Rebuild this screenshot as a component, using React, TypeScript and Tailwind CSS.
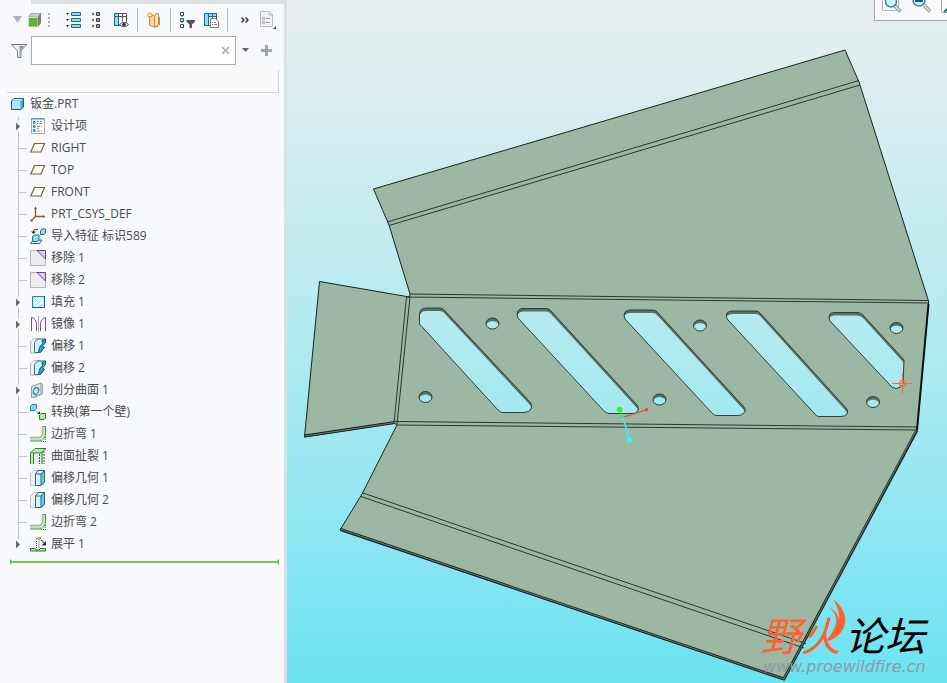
import { useState, type ReactNode } from 'react';

type IconName =
    | 'items'
    | 'plane'
    | 'csys'
    | 'import'
    | 'remove'
    | 'fill'
    | 'mirror'
    | 'offset'
    | 'split'
    | 'convert'
    | 'flange'
    | 'rip'
    | 'offsetGeom'
    | 'flatten';

interface TreeItem {
    label: string;
    icon: IconName;
    expandable?: boolean;
}

const TREE_ITEMS: TreeItem[] = [
    { label: '设计项', icon: 'items', expandable: true },
    { label: 'RIGHT', icon: 'plane' },
    { label: 'TOP', icon: 'plane' },
    { label: 'FRONT', icon: 'plane' },
    { label: 'PRT_CSYS_DEF', icon: 'csys' },
    { label: '导入特征 标识589', icon: 'import' },
    { label: '移除 1', icon: 'remove' },
    { label: '移除 2', icon: 'remove' },
    { label: '填充 1', icon: 'fill', expandable: true },
    { label: '镜像 1', icon: 'mirror', expandable: true },
    { label: '偏移 1', icon: 'offset' },
    { label: '偏移 2', icon: 'offset' },
    { label: '划分曲面 1', icon: 'split', expandable: true },
    { label: '转换(第一个壁)', icon: 'convert' },
    { label: '边折弯 1', icon: 'flange' },
    { label: '曲面扯裂 1', icon: 'rip' },
    { label: '偏移几何 1', icon: 'offsetGeom' },
    { label: '偏移几何 2', icon: 'offsetGeom' },
    { label: '边折弯 2', icon: 'flange' },
    { label: '展平 1', icon: 'flatten', expandable: true },
];

const ICONS: Record<IconName, ReactNode> = {
    items: (
        <>
            <path d="M1.5 .5h13v15h-13z" fill="#fff" stroke="#a3abae" />
            <path d="M1 0h13v1.5H1z" fill="#3aa0c4" />
            <path d="M3.5 3.5h1.5v2h-1.5zM3.5 7.500h1.5v2h-1.5zM3.5 11.5h1.5v2h-1.5z" fill="#a9e0f7" stroke="#1e86ad" />
            <path d="M7 3.500h2M10 3.500h2M7 5.500h1M9 5.500h3M7 8.500h3M11 8.500h1M7 10.500h2M7 13h3M11 13h1" stroke="#8b8f91" />
        </>
    ),
    plane: <path d="M4.5 3.5h10l-3.500 8.500H.8z" fill="#fdfcf6" stroke="#80622c" strokeWidth="1.200" />,
    csys: (
        <>
            <path d="M5.5 2v8.500H14M5.500 10.500L1 15" fill="none" stroke="#80622c" strokeWidth="1.300" />
            <path d="M4 3l1.500-2.500L7 3zM13 9l2.500 1.500L13 12zM.5 12.500v3h3z" fill="#80622c" />
        </>
    ),
    import: (
        <>
            <path d="M10.5 2.5L12 1h3.500v4L14 6.500h-3.500z" fill="#8fdcf7" stroke="#236f91" />
            <path d="M.5 15.5h9l2.500-3.500H3z" fill="#e3f7fd" stroke="#236f91" />
            <path d="M2.500 8.500L4 7h5v5l-1.500 1.500h-5z" fill="#8fdcf7" stroke="#236f91" />
            <path d="M8 1.500H5.500C4 1.500 3.500 2.500 3.500 4" fill="none" stroke="#333" />
            <path d="M1 3.500h5L3.500 6z" fill="#333" />
        </>
    ),
    remove: (
        <>
            <path d="M.5 .5H8l7.500 7.500v7.500H.5z" fill="#ececee" />
            <path d="M.5 16V.5H7M15.500 9v6.500H0" fill="none" stroke="#b4b4b6" />
            <path d="M7 .5h8.500V9z" fill="#dccdf5" stroke="#6d3b98" />
        </>
    ),
    fill: (
        <>
            <path d="M2 2h13v12H2z" fill="#b9ecfb" />
            <path d="M4 8l4-4M4 12l8-8M9 12l4-4M4 10l6-6M6 13l7-7" stroke="#fff" />
            <path d="M2.500 2.500h12v11h-12z" fill="none" stroke="#2389ad" />
            <path d="M14.500 2v11.500H2" fill="none" stroke="#1a617f" />
        </>
    ),
    mirror: (
        <>
            <path d="M1.500 15V1.500c3 .5 5 3 5 7V15" fill="#fff" stroke="#7b4b9e" />
            <path d="M15.500 15V1.500c-3 .5-5 3-5 7V15" fill="#fff" stroke="#7b4b9e" />
            <path d="M8.500 0v16" stroke="#aaa" />
        </>
    ),
    offset: (
        <>
            <path d="M.5 4L4 .5h7L8 4v11H.5z" fill="#efefef" stroke="#b2b2b2" />
            <path d="M4.500 4.500L7.500 1h8v3L12 7.500l2 2-3.500 5h-6z" fill="#d3f3fd" stroke="#277aa0" />
            <path d="M12 2.500L15.500 1v3.500l-3 3.500 2 1.500-4.500 5-1.500-1 1.500-5 2.500-3z" fill="#28a2d2" stroke="#1c5977" />
        </>
    ),
    split: (
        <>
            <path d="M1.500 4.500L11 1v11l-9.500 3.500z" fill="#e4e6e7" stroke="#92989b" />
            <path d="M11 1l1.500 1v10L3 16l-1.500-.5" fill="none" stroke="#9ea5a7" />
            <ellipse cx="6" cy="9" rx="2.500" ry="3.500" fill="#d5f3ff" stroke="#258bb1" strokeWidth="1.300" transform="rotate(20 6 9)" />
        </>
    ),
    convert: (
        <>
            <path d="M.5 2.500l1.500-2h4.500v4l-1.500 2H.5z" fill="#80d8fa" stroke="#2783a8" />
            <path d="M9.500 11l1.500-1.500h4.500V14L14 15.500H9.500z" fill="#b3ee92" stroke="#357a28" />
            <path d="M6.500 7L9 9.500" stroke="#444" strokeDasharray="1 1" />
            <path d="M10 7v3H7z" fill="#333" />
        </>
    ),
    flange: (
        <>
            <path d="M0 11.500h8c3 0 4.500-1.500 4.500-4.500V.5h3V8c0 4-2.500 7-7 7H0z" fill="#c2e9b4" />
            <path d="M0 11.500h8c3 0 4.500-1.500 4.500-4.500V1" fill="none" stroke="#a9afa9" strokeWidth="1.300" />
            <path d="M12.500 .5h3V8c0 4-2.500 7-7 7H0" fill="none" stroke="#55904b" />
            <path d="M11 15.500h5M15.500 11v5" stroke="#317229" strokeDasharray="1 1" />
        </>
    ),
    rip: (
        <>
            <path d="M3.500 5h8v11h-8z" fill="#ececec" />
            <path d="M.5 5L5 .5h11L11 5z" fill="#bce9a7" stroke="#3d7d32" />
            <path d="M1 5h2v11H1z" fill="#bce9a7" />
            <path d="M.5 16V5M3.500 16V5" stroke="#3d7d32" />
            <path d="M9.500 6v10M14 3v13" stroke="#254f86" strokeDasharray="2 1" />
            <path d="M11.500 5v11M12.500 4v12" stroke="#77b968" />
        </>
    ),
    offsetGeom: (
        <>
            <path d="M.5 4L4 .5h5v15H.5z" fill="#efefef" stroke="#c0c0c0" />
            <path d="M5.500 4L8 .5h6.500V12L11 15.500H5.500z" fill="#d3f3fd" stroke="#21658a" />
            <path d="M11 4l3.500-3.500V12L11 15.500z" fill="#6cc6f2" stroke="#21658a" />
            <path d="M5.500 4H11" stroke="#21658a" />
        </>
    ),
    flatten: (
        <>
            <path d="M.5 12.500H5L6.500 14H9l1.500-1.500h5v2.500H.5z" fill="#b8ebab" stroke="#317229" />
            <path d="M6.500 12V3.500h2.500V12" fill="#fff" stroke="#2e5c28" strokeDasharray="1 1" />
            <path d="M6 3.500L7.500 2H11L9.500 3.500" fill="#b8ebab" stroke="#55904b" />
            <path d="M11 4.500c1.500 0 2.500 1 3 2.500" fill="none" stroke="#333" />
            <path d="M16 5v4.500h-4.500z" fill="#333" />
        </>
    ),
};

// Slot outlines of the base wall, left to right
const SLOTS = [
    'M419.5 324V314Q420 308 426 308H440Q443 308 445 311L530 402Q533 406 531 409Q529 412.5 524 412.5H503Q500 412.5 498 410Z',
    'M518 318Q516 314 518 311Q520 308.5 523 308.5H546Q549 308.5 551 311L637 405Q640 409 637 412Q636 413.5 632 413.5H609Q607 413.5 604 411Z',
    'M625 319Q623 315 625 312Q627 310 630 310H653Q656 310 658 313L743 406Q747 410 744 413Q742 415.5 738 415.5H717Q714 415.5 712 413Z',
    'M728 320Q725 317 727 313Q729 311 733 311H756Q759 311 761 314L846 408Q849 411 847 414Q845 416.5 841 416.5H819Q816 416.5 814 413Z',
    'M830 321Q828 317 830 314Q832 312.5 835 312.5H857Q861 312.5 863 315L904 360L903 384Q901 388 896 388.5Q892 388 890 385Z',
];

const HOLES = [
    [492.5, 323.5],
    [425.5, 397],
    [700, 325.5],
    [659.5, 399.5],
    [896.5, 328],
    [873, 402],
];

function Cutouts() {
    return (
        <>
            {SLOTS.map(d => <path key={d} d={d} />)}
            {HOLES.map(([x, y]) => <ellipse key={x} cx={x} cy={y} rx="6.5" ry="5.5" />)}
        </>
    );
}

function Connector({ first, last, arrow }: { first?: boolean; last?: boolean; arrow?: boolean }) {
    return (
        <svg width="16" height="22" viewBox="0 0 16 22" className="block" aria-hidden="true">
            <path d={`M4.5 ${first ? 2 : 0}V${arrow ? 6 : 11}`} stroke="#c3c6c8" />
            {!last && <path d={`M4.5 ${arrow ? 16 : 11}V22`} stroke="#c3c6c8" />}
            {arrow ? <path d="M2 7.5l4 4-4 4z" fill="#666" /> : <path d="M5 11.5h8" stroke="#c3c6c8" />}
        </svg>
    );
}

function ModelTree() {
    const [selected, setSelected] = useState('');

    return (
        <div className="text-[12px] leading-[22px] text-[#4b4b4b]">
            <div className="flex h-[22px] items-center gap-[5px] pl-[11px]">
                <svg width="15" height="14" viewBox="0 0 15 14" className="-ml-px" aria-hidden="true">
                    <path d="M1.5 4L4 1.5h9.500V10L11 12.500H1.5z" fill="#35a9e1" stroke="#1d5a7c" />
                    <path d="M2 4h8.500v8H2z" fill="#ade7fb" />
                    <path d="M2 3.500l2-1.500h9l-2 1.500z" fill="#dff6fe" />
                </svg>
                <span>钣金.PRT</span>
            </div>
            <ul className="pl-[14px]">
                {TREE_ITEMS.map((item, i) => (
                    <li key={item.label} className="flex h-[22px] items-center">
                        {item.expandable ? (
                            <button type="button" aria-label={`展开 ${item.label}`}>
                                <Connector arrow first={i === 0} last={i === TREE_ITEMS.length - 1} />
                            </button>
                        ) : (
                            <Connector />
                        )}
                        <button
                            type="button"
                            aria-pressed={selected === item.label}
                            onClick={() => setSelected(item.label)}
                            className="flex items-center gap-[5px] whitespace-nowrap"
                        >
                            <svg width="16" height="16" viewBox="0 0 16 16" aria-hidden="true">
                                {ICONS[item.icon]}
                            </svg>
                            {item.label}
                        </button>
                    </li>
                ))}
            </ul>
        </div>
    );
}

function ToolButton({ label, className = '', children }: { label: string; className?: string; children: ReactNode }) {
    return (
        <button type="button" aria-label={label} className={`shrink-0 ${className}`}>
            {children}
        </button>
    );
}

function Separator() {
    return <span className="h-6 w-px shrink-0 bg-[#b3b8bb]" />;
}

function TreeToolbar() {
    return (
        <div className="flex h-8 items-center pl-[13px]">
            <ToolButton label="菜单" className="mr-[5px]">
                <svg width="10" height="8" viewBox="0 0 10 8"><path d="M0 0h9L4.5 7z" fill="#b2b5b7" /></svg>
            </ToolButton>
            <ToolButton label="模型" className="mr-[6px]">
                <svg width="14" height="14" viewBox="0 0 14 14">
                    <path d="M0 4l3-4h11l-4 4z" fill="#a6a6a6" />
                    <path d="M1.5 3.500L3.500 1h8L10 3.500z" fill="#c9c9c9" />
                    <path d="M10 4l3-4v10l-3 4z" fill="#7b7b7b" />
                    <path d="M0 4h10v10H0z" fill="#d5dfd2" />
                    <path d="M1 5h8.500v8.500H1z" fill="#58b531" />
                </svg>
            </ToolButton>
            <svg width="3" height="16" viewBox="0 0 3 16" className="mr-[15px] shrink-0" aria-hidden="true">
                <path d="M1 1v15" stroke="#aeb1b3" strokeWidth="2" strokeDasharray="2 2" />
            </svg>
            <ToolButton label="全部展开" className="mr-[10px]">
                <svg width="16" height="16" viewBox="0 0 16 16">
                    <path d="M5.5 .5h9v3h-9zM5.500 6.500h9v3h-9zM5.500 12.500h9v3h-9z" fill="#8bdcf8" stroke="#1c698d" />
                    <path d="M0 1h3L1.500 3zM0 7h3L1.500 9zM0 13h3L1.500 15z" fill="#222" />
                </svg>
            </ToolButton>
            <ToolButton label="全部折叠" className="mr-[13px]">
                <svg width="9" height="16" viewBox="0 0 9 16">
                    <path d="M4.5 .5h3v3h-3zM4.500 6.500h3v3h-3zM4.500 12.500h3v3h-3z" fill="#999" stroke="#444" />
                    <path d="M.5 .5v3l2-1.500zM.5 6.500v3l2-1.500zM.5 12.500v3l2-1.500z" fill="#222" />
                </svg>
            </ToolButton>
            <ToolButton label="树列" className="mr-[8px]">
                <svg width="15" height="16" viewBox="0 0 15 16">
                    <path d="M.5 1.500h12v12H.5z" fill="#fff" stroke="#555" />
                    <path d="M.5 1.500h4v12h-4z" fill="#8bdcf8" stroke="#1c698d" />
                    <path d="M.5 4.500h12M8.500 1.500v8" stroke="#555" />
                    <path d="M5.500 12.500Q10 8 14.500 12.500Q10 17 5.500 12.500z" fill="#fff" stroke="#555" />
                    <circle cx="10" cy="12.500" r="1.800" fill="#333" />
                </svg>
            </ToolButton>
            <Separator />
            <ToolButton label="新建层" className="mx-[9px]">
                <svg width="14" height="16" viewBox="0 0 14 16">
                    <path d="M2.500 3h4l1 1.500 5 .5v8L10 15H7l-4.500-2z" fill="#f6d595" stroke="#c18c45" />
                    <path d="M7.500 5l1.500-3.500h2.500V12l-4 3z" fill="#fde6bb" stroke="#c18c45" />
                    <path d="M3 0v6M0 3h6M1 1l4 4M5 1L1 5" stroke="#f08a13" />
                    <circle cx="3" cy="3" r="1.300" fill="#fff3b5" />
                </svg>
            </ToolButton>
            <Separator />
            <ToolButton label="树过滤器" className="ml-[9px] mr-[8px]">
                <svg width="16" height="16" viewBox="0 0 16 16">
                    <path d="M2 4v8" stroke="#555" strokeDasharray="1 1" />
                    <path d="M.5 .5h3v3h-3zM.5 12.500h3v3h-3z" fill="#fff" stroke="#444" />
                    <path d="M.5 6.500h3v3h-3z" fill="#8bdcf8" stroke="#1c698d" />
                    <path d="M6.500 8H15v1.500L12 12.500V16h-2.500v-3.500l-3-3z" fill="#555" />
                </svg>
            </ToolButton>
            <ToolButton label="树设置" className="mr-[8px]">
                <svg width="15" height="16" viewBox="0 0 15 16">
                    <path d="M.5 1.500h12v12H.5z" fill="#fff" stroke="#555" />
                    <path d="M.5 1.500h4v12h-4zM4.500 1.500h8v3h-8z" fill="#8bdcf8" stroke="#1c698d" />
                    <path d="M8.500 1.500v5" stroke="#1c698d" />
                    <path d="M6.500 6.500h5l3 3v6h-8z" fill="#fff" stroke="#777" />
                    <path d="M8 10.500h1M10 10.500h2M8 12.500h1M10 12.500h3" stroke="#777" />
                </svg>
            </ToolButton>
            <Separator />
            <ToolButton label="更多" className="ml-[13px] mr-[10px]">
                <svg width="9" height="8" viewBox="0 0 9 8">
                    <path d="M.5 1.500L3 4 .5 6.500M4.500 1.500L7 4 4.500 6.500" fill="none" stroke="#333" strokeWidth="1.400" />
                </svg>
            </ToolButton>
            <ToolButton label="详细信息">
                <svg width="17" height="18" viewBox="0 0 17 18">
                    <path d="M.5 .5h8.500L12.500 4v11.500H.5z" fill="#f1f2f3" stroke="#b7babc" />
                    <path d="M9 .5V4h3.500" fill="none" stroke="#b7babc" />
                    <circle cx="3.500" cy="7.500" r="1.200" fill="none" stroke="#999" />
                    <circle cx="3.500" cy="11.500" r="1.200" fill="none" stroke="#999" />
                    <path d="M6 7.500h4M6 11.500h4" stroke="#999" />
                    <path d="M16 15v3h-3z" fill="#444" />
                </svg>
            </ToolButton>
        </div>
    );
}

function SearchRow() {
    const [query, setQuery] = useState('');

    return (
        <div className="flex h-[29px] items-center pl-[11px]">
            <svg width="17" height="16" viewBox="0 0 17 16" className="mr-[3px] shrink-0" aria-hidden="true">
                <path d="M.5 1.500h15L10 8v6.500H6.500V8z" fill="#eee" stroke="#888" />
                <path d="M8.500 3h5L9.500 7.500V14h-1z" fill="#999" />
                <path d="M0 1.500h16" stroke="#777" />
            </svg>
            <div className="flex h-full w-[205px] items-center border border-[#a3afb3] bg-white pr-[5px]">
                <input
                    type="text"
                    aria-label="搜索模型树"
                    value={query}
                    onChange={e => setQuery(e.target.value)}
                    className="h-full min-w-0 flex-1 px-1 text-[12px] outline-none"
                />
                <button type="button" aria-label="清除" onClick={() => setQuery('')}>
                    <svg width="9" height="9" viewBox="0 0 9 9"><path d="M1 1l7 7M8 1L1 8" stroke="#9da0a2" strokeWidth="1.200" /></svg>
                </button>
            </div>
            <button type="button" aria-label="搜索选项" className="ml-[6px]">
                <svg width="8" height="5" viewBox="0 0 8 5"><path d="M0 0h7L3.500 4z" fill="#666" /></svg>
            </button>
            <button type="button" aria-label="添加" className="ml-[11px]">
                <svg width="12" height="12" viewBox="0 0 12 12"><path d="M5.500 0v11M0 5.500h11" stroke="#a3a6a8" strokeWidth="3" /></svg>
            </button>
        </div>
    );
}

function SheetMetalModel() {
    return (
        <svg
            className="block h-full w-full"
            viewBox="287 0 660 683"
            preserveAspectRatio="xMidYMid meet"
            role="img"
            aria-label="钣金"
        >
            <defs>
                <clipPath id="cutouts">
                    {SLOTS.map(d => <path key={d} d={d} />)}
                    {HOLES.map(([x, y]) => <ellipse key={x} cx={x} cy={y} rx="6.5" ry="5.5" />)}
                </clipPath>
                <mask id="through" maskUnits="userSpaceOnUse" x="287" y="0" width="660" height="683">
                    <path d="M287 0h660v683H287z" fill="#fff" />
                    <g clipPath="url(#cutouts)">
                        <g transform="translate(0 3)">
                            <Cutouts />
                        </g>
                    </g>
                </mask>
            </defs>

            {/* Walls */}
            <g mask="url(#through)">
                <path
                    d="M319.5 281.5L409.5 297L410 294L389 225L373.5 189L845 50L859 82L928.5 301V305L917 430L784 680L340 530L362 494L397 425L394 423L304.5 437Z"
                    fill="#9cb8a5"
                    stroke="#18221d"
                />
                <g fill="#5d7064">
                    <Cutouts />
                </g>
            </g>
            <g fill="none" stroke="#26332b" strokeWidth=".9">
                <Cutouts />
            </g>

            {/* Bend lines */}
            <g fill="none" stroke="#1c2721" strokeWidth=".9">
                <path d="M387 222L859 80.5M389 225.5L860 85" />
                <path d="M410 294L928 300.5M406 297L928 303" />
                <path d="M406.5 297L394 423M410 297L397 424" />
                <path d="M395 421.5L917 427M397 425L917 430" />
                <path d="M363 493L806 643.5M361 496.5L804 648" />
            </g>

            {/* Sheet thickness */}
            <g fill="none" stroke="#1b2520" strokeWidth="3">
                <path d="M304.5 436L395 422.5" />
                <path d="M340.5 529.5L784 679L917 430" />
            </g>
            <g fill="none" stroke="#6a7c70">
                <path d="M305 436L395 422.5" />
                <path d="M341 529.5L784 679L916.5 430" />
            </g>
            <path d="M928.5 304L917 430" stroke="#111" strokeWidth="2" />

            {/* Datum axes */}
            <path d="M624 417L646 410" stroke="#f14444" strokeWidth="1.300" />
            <circle cx="646.5" cy="409.5" r="1.800" fill="#f14444" />
            <path d="M623 417L629.5 440" stroke="#35f0f4" strokeWidth="1.500" />
            <circle cx="629.5" cy="440" r="2.500" fill="#35f4fa" />
            <path d="M620 409L623 418" stroke="#2fec39" strokeWidth="1.300" />
            <circle cx="619.5" cy="409.5" r="2.800" fill="#2bf42d" />

            {/* Picked point */}
            <g fill="none" stroke="#fb6b3b" strokeWidth="1.200">
                <path d="M892 383.5h20M902.5 373.5v20" />
                <circle cx="902.5" cy="383.5" r="3" />
            </g>
        </svg>
    );
}

function ViewToolbar() {
    return (
        <div className="absolute right-0 top-0 flex h-[21px] w-[73px] items-start gap-[9px] overflow-hidden border-b border-l border-[#a2a6a8] bg-[#f7f9fb] pl-[7px]">
            <button type="button" aria-label="重新调整" className="shrink-0">
                <svg width="20" height="14" viewBox="0 0 20 14">
                    <path d="M.5 0v10.500h16V0" fill="#fff" stroke="#b5b8ba" />
                    <path d="M13 6l5.500 5.500" stroke="#94999c" strokeWidth="3.500" />
                    <path d="M13 6l5 5" stroke="#e2e4e5" strokeWidth="1.500" />
                    <circle cx="9" cy="1.500" r="5.500" fill="#d4f3fd" stroke="#3385ab" strokeWidth="1.500" />
                </svg>
            </button>
            <button type="button" aria-label="缩小" className="shrink-0">
                <svg width="21" height="14" viewBox="0 0 21 14">
                    <path d="M13 5l6 6.500" stroke="#94999c" strokeWidth="3.500" />
                    <path d="M13 5l5.500 6" stroke="#e2e4e5" strokeWidth="1.500" />
                    <circle cx="8" cy="0" r="6" fill="#d4f3fd" stroke="#3385ab" strokeWidth="1.500" />
                    <path d="M4 1h8" stroke="#15597c" strokeWidth="2" />
                </svg>
            </button>
            <button type="button" aria-label="重画" className="shrink-0">
                <svg width="14" height="14" viewBox="0 0 14 14">
                    <path d="M.5 0v12.500H13V0" fill="#fff" stroke="#a8acae" />
                    <path d="M3 12l3-3" stroke="#1c698d" strokeWidth="2" />
                </svg>
            </button>
        </div>
    );
}

function Watermark() {
    return (
        <div className="absolute bottom-[8px] right-[18px] w-[168px] whitespace-nowrap italic">
            <div className="flex font-['Liberation_Sans','Noto_Sans_CJK_SC',sans-serif] text-[40px] leading-[40px]">
                <span className="text-[#ff6231]">野火</span>
                <span className="ml-[4px] text-black">论坛</span>
            </div>
            <div className="pl-[2px] pt-[2px] font-['DejaVu_Sans',sans-serif] text-[16px] leading-[16px] text-[#8a9ca2]">www.proewildfire.cn</div>
            <svg width="24" height="42" viewBox="0 0 24 42" className="absolute left-[65px] top-[-18px]" aria-hidden="true">
                <path d="M7 0C17 8 22 18 18 28C15 35 9 41 0 42C7 37 12 31 13 24C14 16 12 8 7 0z" fill="#ff6231" />
                <path d="M3 8C10 14 12 21 9 28C6 34 4 38 0 41C5 41 9 38 11 34L14 26C14 18 10 12 3 8z" fill="#ff6231" />
            </svg>
        </div>
    );
}

export default function App() {
    return (
        <div className="flex h-screen overflow-hidden bg-[#f7f9fc] font-['Open_Sans','Noto_Sans_CJK_SC',sans-serif]">
            <aside className="w-[287px] shrink-0 border-r-[3px] border-[#dadfe0]">
                <div className="ml-[31px] h-1 bg-[#dadfe0]" />
                <TreeToolbar />
                <SearchRow />
                <div className="ml-[7px] mr-[5px] mt-[5px] h-[23px] border-b border-r border-[#ced3d6] bg-[#fafafb]" />
                <ModelTree />
                {/* Insert marker */}
                <div className="ml-[10px] mr-[5px] mt-[4px] flex items-center">
                    <svg width="3" height="6" viewBox="0 0 3 6" aria-hidden="true"><path d="M0 0l3 3-3 3z" fill="#57c137" /></svg>
                    <span className="h-[2px] flex-1 bg-[#6bc94d]" />
                    <svg width="3" height="6" viewBox="0 0 3 6" aria-hidden="true"><path d="M3 0L0 3l3 3z" fill="#57c137" /></svg>
                </div>
            </aside>
            <main className="relative min-w-0 flex-1 bg-linear-to-b from-[#e8efef] to-[#6ae3f2]">
                <SheetMetalModel />
                <ViewToolbar />
                <Watermark />
            </main>
        </div>
    );
}
